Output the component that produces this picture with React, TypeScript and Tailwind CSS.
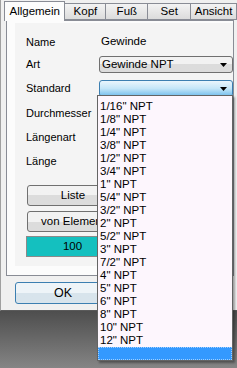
const items = [
  '1/16" NPT',
  '1/8" NPT',
  '1/4" NPT',
  '3/8" NPT',
  '1/2" NPT',
  '3/4" NPT',
  '1" NPT',
  '5/4" NPT',
  '3/2" NPT',
  '2" NPT',
  '5/2" NPT',
  '3" NPT',
  '7/2" NPT',
  '4" NPT',
  '5" NPT',
  '6" NPT',
  '8" NPT',
  '10" NPT',
  '12" NPT',
];

function Arrow() {
  return (
    <svg width="7" height="4" viewBox="0 0 7 4" className="shrink-0">
      <path d="M0 0h7L3.5 4z" fill="#000" />
    </svg>
  );
}

function Tab({ label, selected }: { label: string; selected?: boolean }) {
  if (selected) {
    return (
      <div className="relative z-10 -mb-px flex h-[20px] w-[63px] items-start justify-center border border-b-0 border-[#898c95] bg-[#fcfcfc] pt-[4px]">
        {label}
      </div>
    );
  }
  return (
    <div className="-ml-px flex h-[17px] items-center justify-center border border-[#898c95] bg-gradient-to-b from-[#f3f3f3] to-[#dcdcdc]">
      {label}
    </div>
  );
}

function Button({ label }: { label: string }) {
  return (
    <div className="flex h-[21px] w-[92px] items-center justify-center whitespace-nowrap rounded-[3px] border border-[#707070] bg-gradient-to-b from-[#f2f2f2] from-50% to-[#dcdcdc] to-50%">
      {label}
    </div>
  );
}

function Row({ label, children, h = 16, mt }: { label: string; children?: React.ReactNode; h?: number; mt: string }) {
  return (
    <div className={`flex items-center ${mt}`} style={{ height: h }}>
      <div className="w-[73px] shrink-0">{label}</div>
      {children}
    </div>
  );
}

export default function App() {
  return (
    <div className="relative h-[368px] w-[237px] overflow-hidden text-[11.5px] leading-none text-black [font-family:'Liberation_Sans',Arial,sans-serif]">
      <div className="h-[311px] border-b border-l border-b-[#5a5a5a] border-l-[#a0a0a0] bg-[#f0f0f0]">
        <div className="flex h-[20px] items-end pl-[3px]">
          <Tab label="Allgemein" selected />
          <div className="w-[42px]">
            <Tab label="Kopf" />
          </div>
          <div className="w-[43px]">
            <Tab label="Fuß" />
          </div>
          <div className="w-[44px]">
            <Tab label="Set" />
          </div>
          <div className="w-[47px]">
            <Tab label="Ansicht" />
          </div>
        </div>
        <div className="ml-[5px] mr-[3px] h-[256px] border border-[#898c95] bg-[#fcfcfc] pt-[2px]">
          <div className="ml-[8px] h-[243px] bg-[#f4f4f4] pl-[11px] text-[11px]">
            <Row label="Name" mt="pt-[11px] box-content">
              <span className="pl-[2px] text-[11.5px]">Gewinde</span>
            </Row>
            <Row label="Art" h={17} mt="mt-[6px]">
              <div className="flex h-[17px] flex-1 items-center justify-between rounded-[3px] border border-[#707070] bg-gradient-to-b from-[#f2f2f2] from-50% to-[#dcdcdc] to-50% pl-[2px] pr-[5px] text-[11.5px]">
                <span>Gewinde NPT</span>
                <Arrow />
              </div>
            </Row>
            <Row label="Standard" h={17} mt="mt-[7px]">
              <div className="flex h-[17px] flex-1 items-center justify-end rounded-[3px] border border-[#3c7fb1] bg-gradient-to-b from-[#eaf6fd] via-[#c4e6f8] to-[#72bdec] pr-[5px]">
                <Arrow />
              </div>
            </Row>
            <Row label="Durchmesser" mt="mt-[8px]" />
            <Row label="Längenart" mt="mt-[8px]" />
            <Row label="Länge" mt="mt-[8px]" />
            <div className="ml-px mt-[16px] flex flex-col gap-[5px] text-[11.5px]">
              <Button label="Liste" />
              <Button label="von Element" />
            </div>
            <div className="mt-[4px] flex h-[21px] w-[93px] items-center justify-center border border-[#8a8a8a] bg-[#14c0bf] text-[11.5px]">
              100
            </div>
          </div>
        </div>
        <div className="ml-[14px] mt-[6px] flex h-[22px] w-[96px] items-center justify-center rounded-[3px] border border-[#3c7fb1] bg-gradient-to-b from-[#eef4f8] from-50% to-[#d8e4ec] to-50% text-[12.5px]">
          OK
        </div>
      </div>
      <div className="h-[57px] bg-gradient-to-b from-[#4e4e4e] to-[#858585]" />

      {/* open drop-down list of the Standard combo, lies over the form */}
      <div className="absolute left-[97px] top-[95px] h-[266px] w-[136px] border border-[#646464] bg-[#fdf6fd] pt-[4px] shadow-[2px_2px_2px_rgba(0,0,0,0.35)]">
        {items.map((it) => (
          <div key={it} className="flex h-[13px] items-center pl-[2px] text-[11.5px]">
            {it}
          </div>
        ))}
        <div className="h-[13px] border border-dotted border-[#9fd0ff] bg-[#3399ff]" />
      </div>
    </div>
  );
}
